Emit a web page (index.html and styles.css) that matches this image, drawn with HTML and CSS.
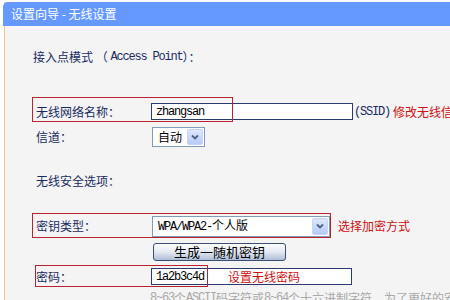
FILE: index.html
```html
<!doctype html>
<html lang="zh-CN">
    <head>
        <meta charset="UTF-8">
        <meta name="viewport" content="width=device-width, initial-scale=1.0">
        <title>设置向导 - 无线设置</title>

        <link rel="stylesheet" href="styles.css">
    </head>
    <body>
        <div class="page">
            <div class="panel">
                <div class="title">设置向导 - 无线设置</div>
                <div class="content">
                    <div class="row row--mode">
                        接入点模式&nbsp;（&nbsp;<span class="en">Access Point</span>）：
                    </div>

                    <div class="row row--ssid">
                        <span class="mark mark--ssid"></span>
                        <span class="label">无线网络名称：</span>
                        <span class="input input--ssid"><span class="en">zhangsan</span></span>
                        <span class="en hint">(SSID)</span>
                        <span class="note">修改无线信息</span>
                    </div>

                    <div class="row row--channel">
                        <span class="label">信道：</span>
                        <span class="select select--channel">
                            <span class="select__text">自动</span>
                            <span class="select__arrow">
                                <svg width="8" height="6" viewBox="0 0 8 6"><path d="M1 1.5 L4 4.5 L7 1.5" fill="none" stroke="#4d6185" stroke-width="1.8"/></svg>
                            </span>
                        </span>
                    </div>

                    <div class="row row--security">无线安全选项：</div>

                    <div class="row row--keytype">
                        <span class="mark mark--keytype"></span>
                        <span class="label">密钥类型：</span>
                        <span class="select select--keytype">
                            <span class="select__text"><span class="en">WPA/WPA2-</span>个人版</span>
                            <span class="select__arrow">
                                <svg width="8" height="6" viewBox="0 0 8 6"><path d="M1 1.5 L4 4.5 L7 1.5" fill="none" stroke="#4d6185" stroke-width="1.8"/></svg>
                            </span>
                        </span>
                        <span class="note note--keytype">选择加密方式</span>
                    </div>

                    <div class="row row--button">
                        <span class="button">生成一随机密钥</span>
                    </div>

                    <div class="row row--password">
                        <span class="mark mark--password"></span>
                        <span class="label">密码：</span>
                        <span class="input input--password">
                            <span class="en">1a2b3c4d</span>
                            <span class="note note--password">设置无线密码</span>
                        </span>
                    </div>

                    <div class="row row--tip">
                        <span class="en">8~63</span>个<span class="en">ASCII</span>码字符或<span class="en">8~64</span>个十六进制字符，为了更好的安全性
                    </div>
                </div>
            </div>
        </div>
    </body>
</html>
```

FILE: styles.css
```css
/* base */
*,
*::before,
*::after {
    box-sizing: border-box;
    padding: 0;
    margin: 0;
}

html,
body {
    width: 450px;
    height: 300px;
    overflow: hidden;
    background-color: #fff;
}

body {
    font-family: "Noto Sans CJK SC", sans-serif;
    font-size: 12px;
    line-height: 16px;
    color: #1a2c5e;
}

.en {
    font-family: "Liberation Mono", monospace;
    font-size: 12px;
    letter-spacing: -1.2px;
}

/* panel */
.page {
    height: 300px;
    padding: 2px 0 0 4px;
}

.panel {
    height: 298px;
    background-color: #f4f4f4;
    border-left: 1px solid #efc590;
}

.title {
    height: 24px;
    margin-left: -2px;
    padding-left: 8px;
    line-height: 24px;
    color: #fff;
    background-color: #6699ff;
    border-top-left-radius: 5px;
}

.content {
    padding-left: 31px;
    border-top: 4px solid #faf3fb;
}

/* rows */
.row {
    position: relative;
    display: flex;
    align-items: center;
    white-space: nowrap;
}

.row > * {
    flex: none;
}

.label {
    width: 115px;
}

.row--mode {
    height: 20px;
    margin-top: 17px;
    margin-left: -3px;
}

.row--ssid {
    height: 23px;
    margin-top: 33px;
}

.row--channel {
    height: 24px;
    margin-top: 2px;
}

.row--security {
    height: 20px;
    margin-top: 22px;
}

.row--keytype {
    height: 24px;
    margin-top: 23px;
}

.row--button {
    height: 20px;
    margin-top: 4px;
    padding-left: 117px;
}

.row--password {
    height: 23px;
    margin-top: 3px;
}

.row--tip {
    height: 16px;
    margin-top: 2px;
    padding-left: 114px;
    color: #a9a9a9;
}

/* red annotation boxes */
.mark {
    position: absolute;
    border: 1px solid #b8232f;
}

.mark--ssid {
    top: -3px;
    left: -4px;
    width: 201px;
    height: 25px;
}

.mark--keytype {
    top: -1px;
    left: -4px;
    width: 299px;
    height: 25px;
}

.mark--password {
    top: 0;
    left: -1px;
    width: 173px;
    height: 22px;
}

.note {
    color: #cc1111;
}

/* fields */
.input {
    display: flex;
    align-items: center;
    height: 17px;
    padding-left: 4px;
    color: #000;
    background-color: #fff;
    border: 1px solid #2b3b6d;
}

.input--ssid {
    width: 202px;
}

.hint {
    margin-left: 1px;
}

.row--ssid .note {
    margin-left: 3px;
}

.input--password {
    width: 201px;
}

.note--password {
    margin-left: 24px;
}

.note--keytype {
    margin-left: 8px;
}

.select {
    display: flex;
    align-items: center;
    margin-left: 1px;
    padding: 1px;
    color: #000;
    background-color: #fff;
    border: 1px solid #7f9db9;
}

.select__text {
    flex: 1;
    padding-left: 4px;
}

.select--channel {
    width: 53px;
    height: 20px;
}

.select--keytype {
    width: 178px;
    height: 21px;
}

.select__arrow {
    display: flex;
    align-items: center;
    justify-content: center;
    width: 16px;
    height: 100%;
    background: linear-gradient(#dde7fd, #b7cbf7);
    border: 1px solid #c6d5fb;
    border-radius: 2px;
}

.button {
    display: flex;
    align-items: center;
    justify-content: center;
    width: 133px;
    height: 18px;
    font-size: 13px;
    color: #000;
    background: linear-gradient(#fdfdfe, #e4e9f2 50%, #aebdd6);
    border: 1px solid #3b4e73;
    border-radius: 3px;
}
```
